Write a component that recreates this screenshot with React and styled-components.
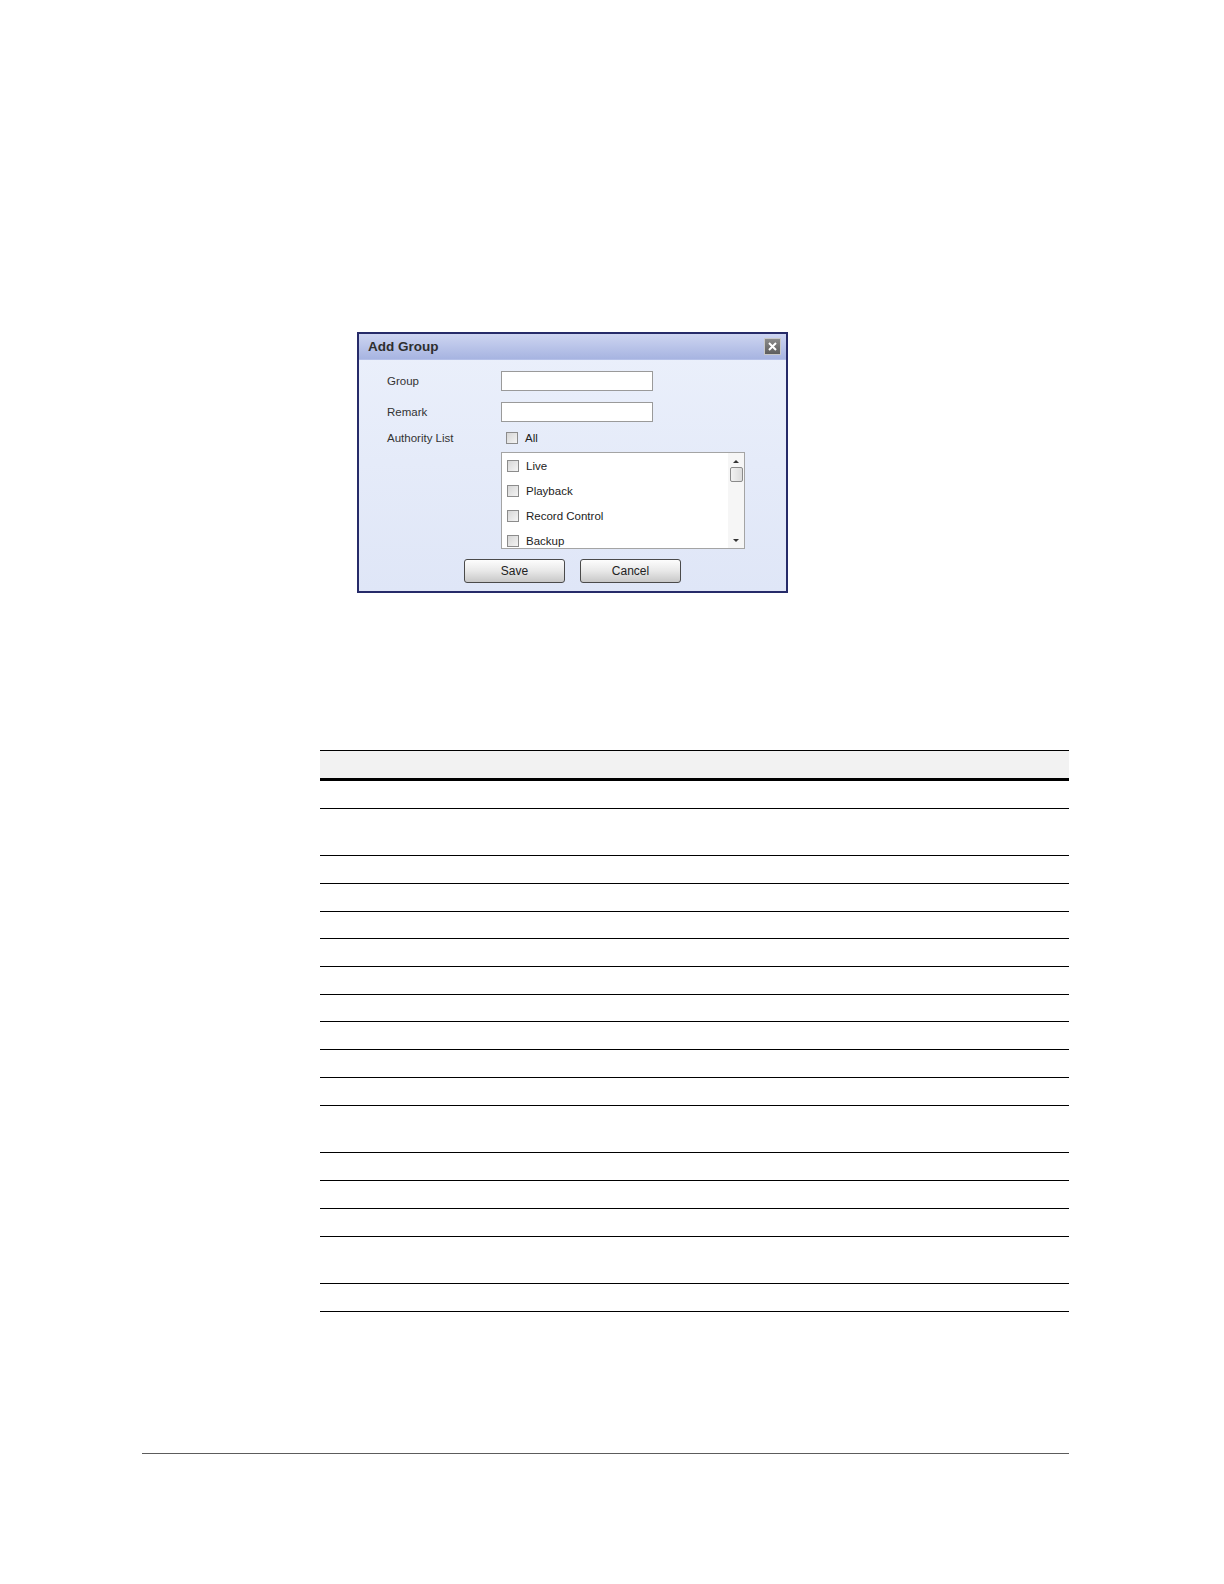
import React from "react";
import styled, { createGlobalStyle } from "styled-components";

const rows = [28, 47, 28, 28, 27, 28, 28, 27, 28, 28, 28, 47, 28, 28, 28, 47, 28];
const perms = ["Live", "Playback", "Record Control", "Backup"];

const App = () => {
  return (
    <Page>
      <GlobalStyle />
      <Dialog>
        <TitleBar>
          <Title>Add Group</Title>
          <CloseButton>
            <svg width="9" height="9" viewBox="0 0 9 9">
              <path d="M1 1 L8 8 M8 1 L1 8" stroke="#fff" strokeWidth="2" />
            </svg>
          </CloseButton>
        </TitleBar>
        <Body>
          <Field $after={11}>
            <Label>Group</Label>
            <TextBox />
          </Field>
          <Field $after={6}>
            <Label>Remark</Label>
            <TextBox />
          </Field>
          <Field $after={4}>
            <Label>Authority List</Label>
            <Check />
            <CheckText>All</CheckText>
          </Field>
          <ListBox>
            <Items>
              {perms.map((p) => (
                <Item key={p}>
                  <Check />
                  <CheckText>{p}</CheckText>
                </Item>
              ))}
            </Items>
            <ScrollBar>
              <Arrow $up />
              <Thumb />
              <Track />
              <Arrow />
            </ScrollBar>
          </ListBox>
          <Buttons>
            <Button>Save</Button>
            <Button>Cancel</Button>
          </Buttons>
        </Body>
      </Dialog>

      <Table>
        <HeadRow />
        {rows.map((h, i) => (
          <Row key={i} $h={h} />
        ))}
      </Table>

      <FooterRule />
    </Page>
  );
};
export default App;

const GlobalStyle = createGlobalStyle`
  body {
    margin: 0;
    background: #fff;
    font-family: "Liberation Sans", Arial, sans-serif;
  }
`;

const Page = styled.div`
  padding-top: 332px;
  display: flex;
  flex-direction: column;
  align-items: flex-start;
`;

const Dialog = styled.div`
  margin-left: 357px;
  width: 431px;
  height: 261px;
  box-sizing: border-box;
  border: 2px solid #262b69;
  display: flex;
  flex-direction: column;
  background: linear-gradient(#ebf0fb, #dfe6f7);
`;

const TitleBar = styled.div`
  height: 25px;
  flex-shrink: 0;
  display: flex;
  align-items: center;
  justify-content: space-between;
  padding: 0 5px 0 9px;
  background: linear-gradient(#cdd5f1, #a7b4e1);
  border-bottom: 1px solid #b4c0e8;
`;

const Title = styled.div`
  font-size: 13.5px;
  font-weight: bold;
  color: #2e2e2e;
`;

const CloseButton = styled.div`
  width: 17px;
  height: 17px;
  box-sizing: border-box;
  display: flex;
  align-items: center;
  justify-content: center;
  background: linear-gradient(#8a8a8a, #5e5e5e);
  border: 1px solid #c8c8c8;
`;

const Body = styled.div`
  flex: 1;
  padding: 11px 0 0 28px;
  display: flex;
  flex-direction: column;
`;

const Field = styled.div`
  display: flex;
  align-items: center;
  height: 20px;
  flex-shrink: 0;
  margin-bottom: ${(p) => p.$after}px;
`;

const Label = styled.div`
  width: 114px;
  font-size: 11.5px;
  color: #333;
`;

const TextBox = styled.div`
  width: 152px;
  height: 20px;
  box-sizing: border-box;
  background: #fff;
  border: 1px solid #9a9a9a;
`;

const Check = styled.span`
  width: 12px;
  height: 12px;
  box-sizing: border-box;
  margin-left: 5px;
  border: 1px solid #8c8c8c;
  background: linear-gradient(135deg, #d6d6d6, #f4f4f4);
  flex-shrink: 0;
`;

const CheckText = styled.span`
  margin-left: 7px;
  font-size: 11.5px;
  color: #222;
`;

const ListBox = styled.div`
  margin-left: 114px;
  width: 244px;
  height: 97px;
  flex-shrink: 0;
  box-sizing: border-box;
  border: 1px solid #a4a4a4;
  background: #fff;
  display: flex;
  overflow: hidden;
`;

const Items = styled.div`
  flex: 1;
  display: flex;
  flex-direction: column;
`;

const Item = styled.div`
  height: 25px;
  flex-shrink: 0;
  display: flex;
  align-items: center;
`;

const ScrollBar = styled.div`
  width: 16px;
  display: flex;
  flex-direction: column;
  align-items: center;
  background: #f6f6f6;
`;

const Arrow = styled.div`
  height: 14px;
  width: 14px;
  display: flex;
  align-items: center;
  justify-content: center;
  &::after {
    content: "";
    border-left: 3px solid transparent;
    border-right: 3px solid transparent;
    ${(p) =>
      p.$up
        ? "border-bottom: 3px solid #333; margin-top: 2px;"
        : "border-top: 3px solid #333; margin-bottom: 2px;"}
  }
`;

const Thumb = styled.div`
  width: 13px;
  height: 15px;
  box-sizing: border-box;
  border: 1px solid #8a8a8a;
  border-radius: 2px;
  background: linear-gradient(90deg, #f2f2f2, #dcdcdc);
`;

const Track = styled.div`
  flex: 1;
`;

const Buttons = styled.div`
  margin: 10px 0 0 -28px;
  display: flex;
  justify-content: center;
  gap: 15px;
`;

const Button = styled.div`
  width: 101px;
  height: 24px;
  box-sizing: border-box;
  border: 1px solid #4a4a4a;
  border-radius: 3px;
  display: flex;
  align-items: center;
  justify-content: center;
  font-size: 12px;
  color: #222;
  background: linear-gradient(#fdfdfd, #e8e8e8 50%, #c8c8c8);
`;

const Table = styled.div`
  margin: 157px 0 0 320px;
  width: 749px;
  display: flex;
  flex-direction: column;
`;

const HeadRow = styled.div`
  height: 31px;
  box-sizing: border-box;
  border-top: 1px solid #000;
  border-bottom: 3px solid #000;
  background: #f2f2f2;
`;

const Row = styled.div`
  height: ${(p) => p.$h}px;
  box-sizing: border-box;
  border-bottom: 1px solid #000;
`;

const FooterRule = styled.div`
  margin: 141px 0 0 142px;
  width: 927px;
  height: 1px;
  background: #5c5c5c;
`;
